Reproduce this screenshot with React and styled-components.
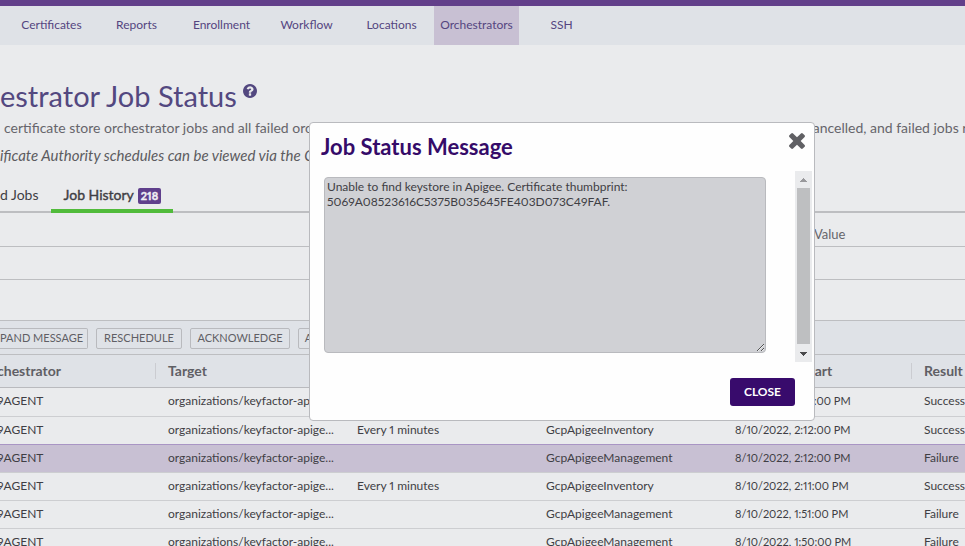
import React from 'react';
import styled, { createGlobalStyle } from 'styled-components';

const Global = createGlobalStyle`
  * { box-sizing: border-box; }
  html, body { margin: 0; background: #eaebed; }
  body {
    font: 12px/16px Lato, "Liberation Sans", sans-serif;
    font-variant-numeric: proportional-nums;
    color: #3f3e44;
    overflow: hidden;
  }
  button, textarea { font-family: inherit; font-variant-numeric: inherit; margin: 0; }
`;

const Page = styled.div`
  position: relative;
  min-height: 100vh;
  overflow: hidden;
`;

const Nav = styled.nav`
  display: flex;
  height: 45px;
  padding-left: 9px;
  border-top: 6px solid #623f8a;
  background: #dfe2e7;
`;

const NavLink = styled.a`
  flex: 0 0 85px;
  line-height: 38px;
  text-align: center;
  text-decoration: none;
  color: #544580;
  background: ${(p) => (p.$active ? '#c8c0d3' : 'transparent')};
`;

const Heading = styled.header`
  display: flex;
  align-items: flex-start;
  gap: 6px;
  padding-top: 31px;
  height: 73px;
`;

const Title = styled.h1`
  margin: 0;
  font-size: 29px;
  line-height: 40px;
  font-weight: 400;
  color: #534880;
`;

const HelpButton = styled.button`
  padding: 0;
  margin-top: 8px;
  border: 0;
  background: none;
  color: #534880;
  line-height: 0;
`;

const Intro = styled.p`
  display: flex;
  margin: 0;
  padding-left: 4px;
  font-size: 14px;
  line-height: 20px;
  color: #66656b;
  white-space: nowrap;
`;

const IntroPart = styled.span`
  flex: ${(p) => (p.$fixed ? '0 0 802px' : '1 0 auto')};
`;

const Note = styled.p`
  margin: 7px 0 0;
  font-size: 15px;
  line-height: 20px;
  font-style: italic;
  color: #5c5b60;
`;

const Tabs = styled.div`
  display: flex;
  height: 48px;
  align-items: flex-end;
  border-bottom: 2px solid #bdbec1;
`;

const Tab = styled.button`
  display: flex;
  align-items: flex-end;
  gap: 4px;
  height: 35px;
  margin-bottom: -2px;
  padding: 0 12px 5px ${(p) => (p.$first ? '0' : '13px')};
  border: 0;
  border-bottom: 4px solid ${(p) => (p.$active ? '#51bb3b' : 'transparent')};
  background: none;
  color: #3f3e44;
  font-size: 14px;
  line-height: 18px;
  -webkit-text-stroke: ${(p) => (p.$active ? '0.4px' : '0')} currentColor;
`;

const Badge = styled.span`
  padding: 0 3px;
  border-radius: 2px;
  background: #5f3f8c;
  color: #f0eef4;
  font-size: 11px;
  line-height: 16px;
  font-weight: 700;
`;

const FieldRow = styled.div`
  height: ${(p) => p.$height};
  padding: 11px 0 0 814px;
  border-bottom: 1px solid #bdbec1;
  font-size: 13px;
  line-height: 20px;
  color: #66656b;
`;

const Toolbar = styled.div`
  display: flex;
  align-items: center;
  gap: 8px;
  height: 34px;
  padding-top: 1px;
  border-bottom: 1px solid #bdbec1;
  background: #dfe2e7;
`;

const Action = styled.button`
  height: 21px;
  min-width: 0;
  padding: 0 ${(p) => (p.$cut ? '4px 0 0' : '5px')};
  border: 1px solid #b9babe;
  border-left-width: ${(p) => (p.$cut ? '0' : '1px')};
  border-radius: ${(p) => (p.$cut ? '0 2px 2px 0' : '2px')};
  flex: 0 0 ${(p) => p.$width};
  background: #dfe2e7;
  color: #5f5f65;
  font-size: 11px;
  line-height: 16px;
  text-align: ${(p) => (p.$cut ? 'left' : 'center')};
  white-space: nowrap;
`;

const Table = styled.table`
  width: calc(100% + 136px);
  table-layout: fixed;
  border-collapse: separate;
  border-spacing: 0;
`;

const Col = styled.col`
  width: ${(p) => (p.$first ? '156px' : 'auto')};
`;

const HeadCell = styled.th`
  height: 33px;
  padding: 0;
  border-bottom: 1px solid #b9babe;
  background: #dfe2e7;
  color: #5f5f65;
  font-size: 14px;
  font-weight: 700;
  text-align: left;
`;

const HeadLabel = styled.div`
  height: 16px;
  padding-left: ${(p) => (p.$first ? '0' : '12px')};
  border-right: 1px solid #cbccd1;
  text-indent: ${(p) => (p.$first ? '-3px' : '0')};
`;

const Row = styled.tr`
  height: ${(p) => (p.$top ? '29px' : '28px')};
  background: ${(p) => (p.$selected ? '#c8c0d3' : '#eaebed')};
`;

const Cell = styled.td`
  padding: 0 12px 2px ${(p) => (p.$first ? '0' : '12px')};
  border-bottom: 1px solid ${(p) => (p.$beforeSelected ? '#a995c4' : '#cdced1')};
  font-size: ${(p) => (p.$date ? '11px' : '12px')};
  text-indent: ${(p) => (p.$first ? '-3px' : '0')};
  overflow: hidden;
  white-space: nowrap;
`;

const Dialog = styled.section`
  position: absolute;
  top: 122px;
  left: 309px;
  width: 506px;
  padding: 10px 2px 14px 11px;
  border: 1px solid #b9babe;
  border-radius: 4px;
  background: #fefefe;
`;

const DialogHead = styled.div`
  display: flex;
  justify-content: space-between;
  align-items: flex-start;
  height: 38px;
  padding-right: 7px;
`;

const DialogTitle = styled.h2`
  margin: 0;
  color: #350b69;
  font-size: 22px;
  line-height: 28px;
  font-weight: 700;
`;

const IconButton = styled.button`
  padding: 0;
  border: 0;
  background: none;
  color: #606064;
  line-height: 0;
`;

const DialogBody = styled.div`
  display: flex;
  justify-content: space-between;
  height: 191px;
  padding-left: 3px;
`;

const Message = styled.textarea`
  width: 442px;
  height: 176px;
  margin-top: 6px;
  padding: 1px 2px;
  border: 1px solid #b9babe;
  border-radius: 4px;
  background: #d0d1d5;
  color: #3f3e44;
  font-size: 12px;
  line-height: 15px;
  outline: 0;
  resize: both;
`;

const ScrollTrack = styled.div`
  display: flex;
  flex-direction: column;
  align-items: center;
  justify-content: space-between;
  width: 17px;
  height: 191px;
  background: #eaebed;
`;

const ScrollThumb = styled.div`
  flex: 1;
  width: 13px;
  background: #bebfc1;
`;

const DialogFoot = styled.div`
  display: flex;
  justify-content: flex-end;
  padding: 16px 17px 0 0;
`;

const CloseButton = styled.button`
  width: 65px;
  height: 28px;
  padding: 0 0 2px;
  border: 0;
  border-radius: 3px;
  background: #380b6c;
  color: #fff;
  font-size: 12px;
  font-weight: 700;
`;

const CloseIcon = () => (
  <svg width="16" height="16" viewBox="302 300 1188 1188" fill="currentColor" aria-hidden="true">
    <path d="M1490 1322q0 40-28 68l-136 136q-28 28-68 28t-68-28l-294-294-294 294q-28 28-68 28t-68-28l-136-136q-28-28-28-68t28-68l294-294-294-294q-28-28-28-68t28-68l136-136q28-28 68-28t68 28l294 294 294-294q28-28 68-28t68 28l136 136q28 28 28 68t-28 68l-294 294 294 294q28 28 28 68z" transform="translate(0 -66)" />
  </svg>
);

const HelpIcon = () => (
  <svg width="14" height="14" viewBox="128 128 1536 1536" fill="currentColor" aria-hidden="true">
    <path d="M1024 1376v-192q0-14-9-23t-23-9h-192q-14 0-23 9t-9 23v192q0 14 9 23t23 9h192q14 0 23-9t9-23zm256-672q0-88-55.5-163t-138.5-116-170-41q-243 0-371 213-15 24 8 42l132 100q7 6 19 6 16 0 25-12 53-68 86-92 34-24 86-24 48 0 85.5 26t37.5 59q0 38-20 61t-68 45q-63 28-115.5 86.5t-52.5 125.5v36q0 14 9 23t23 9h192q14 0 23-9t9-23q0-19 21.5-49.5t54.5-49.5q32-18 49-28.5t46-35 44.5-48 28-60.5 12.5-81zm384 192q0 209-103 385.5t-279.5 279.5-385.5 103-385.5-103-279.5-279.5-103-385.5 103-385.5 279.5-279.5 385.5-103 385.5 103 279.5 279.5 103 385.5z" />
  </svg>
);

const Arrow = ({ down }) => (
  <svg width="17" height={down ? 18 : 17} viewBox={down ? '0 0 17 18' : '0 0 17 17'} shapeRendering="crispEdges" aria-hidden="true">
    <path d={down ? 'M5 8h7l-3.5 4z' : 'M5 11h7l-3.5-4z'} fill={down ? '#4a4a4c' : '#99999c'} />
  </svg>
);

const navItems = ['Certificates', 'Reports', 'Enrollment', 'Workflow', 'Locations', 'Orchestrators', 'SSH'];
const columns = ['chestrator', 'Target', 'Schedule', 'Job Type', 'Operation Start', 'Result'];
const target = 'organizations/keyfactor-apige...';
const rows = [
  ['9AGENT', target, 'Every 1 minutes', 'GcpApigeeInventory', '8/10/2022, 2:13:00 PM', 'Success'],
  ['9AGENT', target, 'Every 1 minutes', 'GcpApigeeInventory', '8/10/2022, 2:12:00 PM', 'Success'],
  ['9AGENT', target, '', 'GcpApigeeManagement', '8/10/2022, 2:12:00 PM', 'Failure'],
  ['9AGENT', target, 'Every 1 minutes', 'GcpApigeeInventory', '8/10/2022, 2:11:00 PM', 'Success'],
  ['9AGENT', target, '', 'GcpApigeeManagement', '8/10/2022, 1:51:00 PM', 'Failure'],
  ['9AGENT', target, '', 'GcpApigeeManagement', '8/10/2022, 1:50:00 PM', 'Failure'],
];
const selected = 2;
const dateColumn = 4;

export default function App() {
  return (
    <Page>
      <Global />
      <Nav>
        {navItems.map((item) => (
          <NavLink key={item} href="#" $active={item === 'Orchestrators'}>{item}</NavLink>
        ))}
      </Nav>
      <main>
        <Heading>
          <Title>estrator Job Status</Title>
          <HelpButton type="button" aria-label="Help"><HelpIcon /></HelpButton>
        </Heading>
        <Intro>
          <IntroPart $fixed>certificate store orchestrator jobs and all failed orchestrator</IntroPart>
          <IntroPart>cancelled, and failed jobs r</IntroPart>
        </Intro>
        <Note>ificate Authority schedules can be viewed via the C</Note>
        <Tabs>
          <Tab type="button" $first>d Jobs</Tab>
          <Tab type="button" $active>Job History <Badge>218</Badge></Tab>
        </Tabs>
        <FieldRow $height="34px">Value</FieldRow>
        <FieldRow $height="33px" />
        <FieldRow $height="41px" />
        <Toolbar>
          <Action type="button" $cut $width="88px">PAND MESSAGE</Action>
          <Action type="button" $width="86px">RESCHEDULE</Action>
          <Action type="button" $width="100px">ACKNOWLEDGE</Action>
          <Action type="button" $width="120px">ACKNOWLEDGE ALL</Action>
        </Toolbar>
        <Table>
          <colgroup>
            {columns.map((c, i) => <Col key={c} $first={i === 0} />)}
          </colgroup>
          <thead>
            <tr>
              {columns.map((c, i) => (
                <HeadCell key={c} scope="col"><HeadLabel $first={i === 0}>{c}</HeadLabel></HeadCell>
              ))}
            </tr>
          </thead>
          <tbody>
            {rows.map((row, r) => (
              <Row key={row[4] + row[3]} $top={r === 0} $selected={r === selected}>
                {row.map((value, i) => (
                  <Cell
                    key={columns[i]}
                    $first={i === 0}
                    $date={i === dateColumn}
                    $beforeSelected={r === selected - 1}
                  >
                    {value}
                  </Cell>
                ))}
              </Row>
            ))}
          </tbody>
        </Table>
      </main>
      <Dialog role="dialog" aria-labelledby="status-title">
        <DialogHead>
          <DialogTitle id="status-title">Job Status Message</DialogTitle>
          <IconButton type="button" aria-label="Close dialog"><CloseIcon /></IconButton>
        </DialogHead>
        <DialogBody>
          <Message
            readOnly
            aria-labelledby="status-title"
            defaultValue={'Unable to find keystore in Apigee. Certificate thumbprint:\n5069A08523616C5375B035645FE403D073C49FAF.'}
          />
          <ScrollTrack>
            <Arrow />
            <ScrollThumb />
            <Arrow down />
          </ScrollTrack>
        </DialogBody>
        <DialogFoot>
          <CloseButton type="button">CLOSE</CloseButton>
        </DialogFoot>
      </Dialog>
    </Page>
  );
}
